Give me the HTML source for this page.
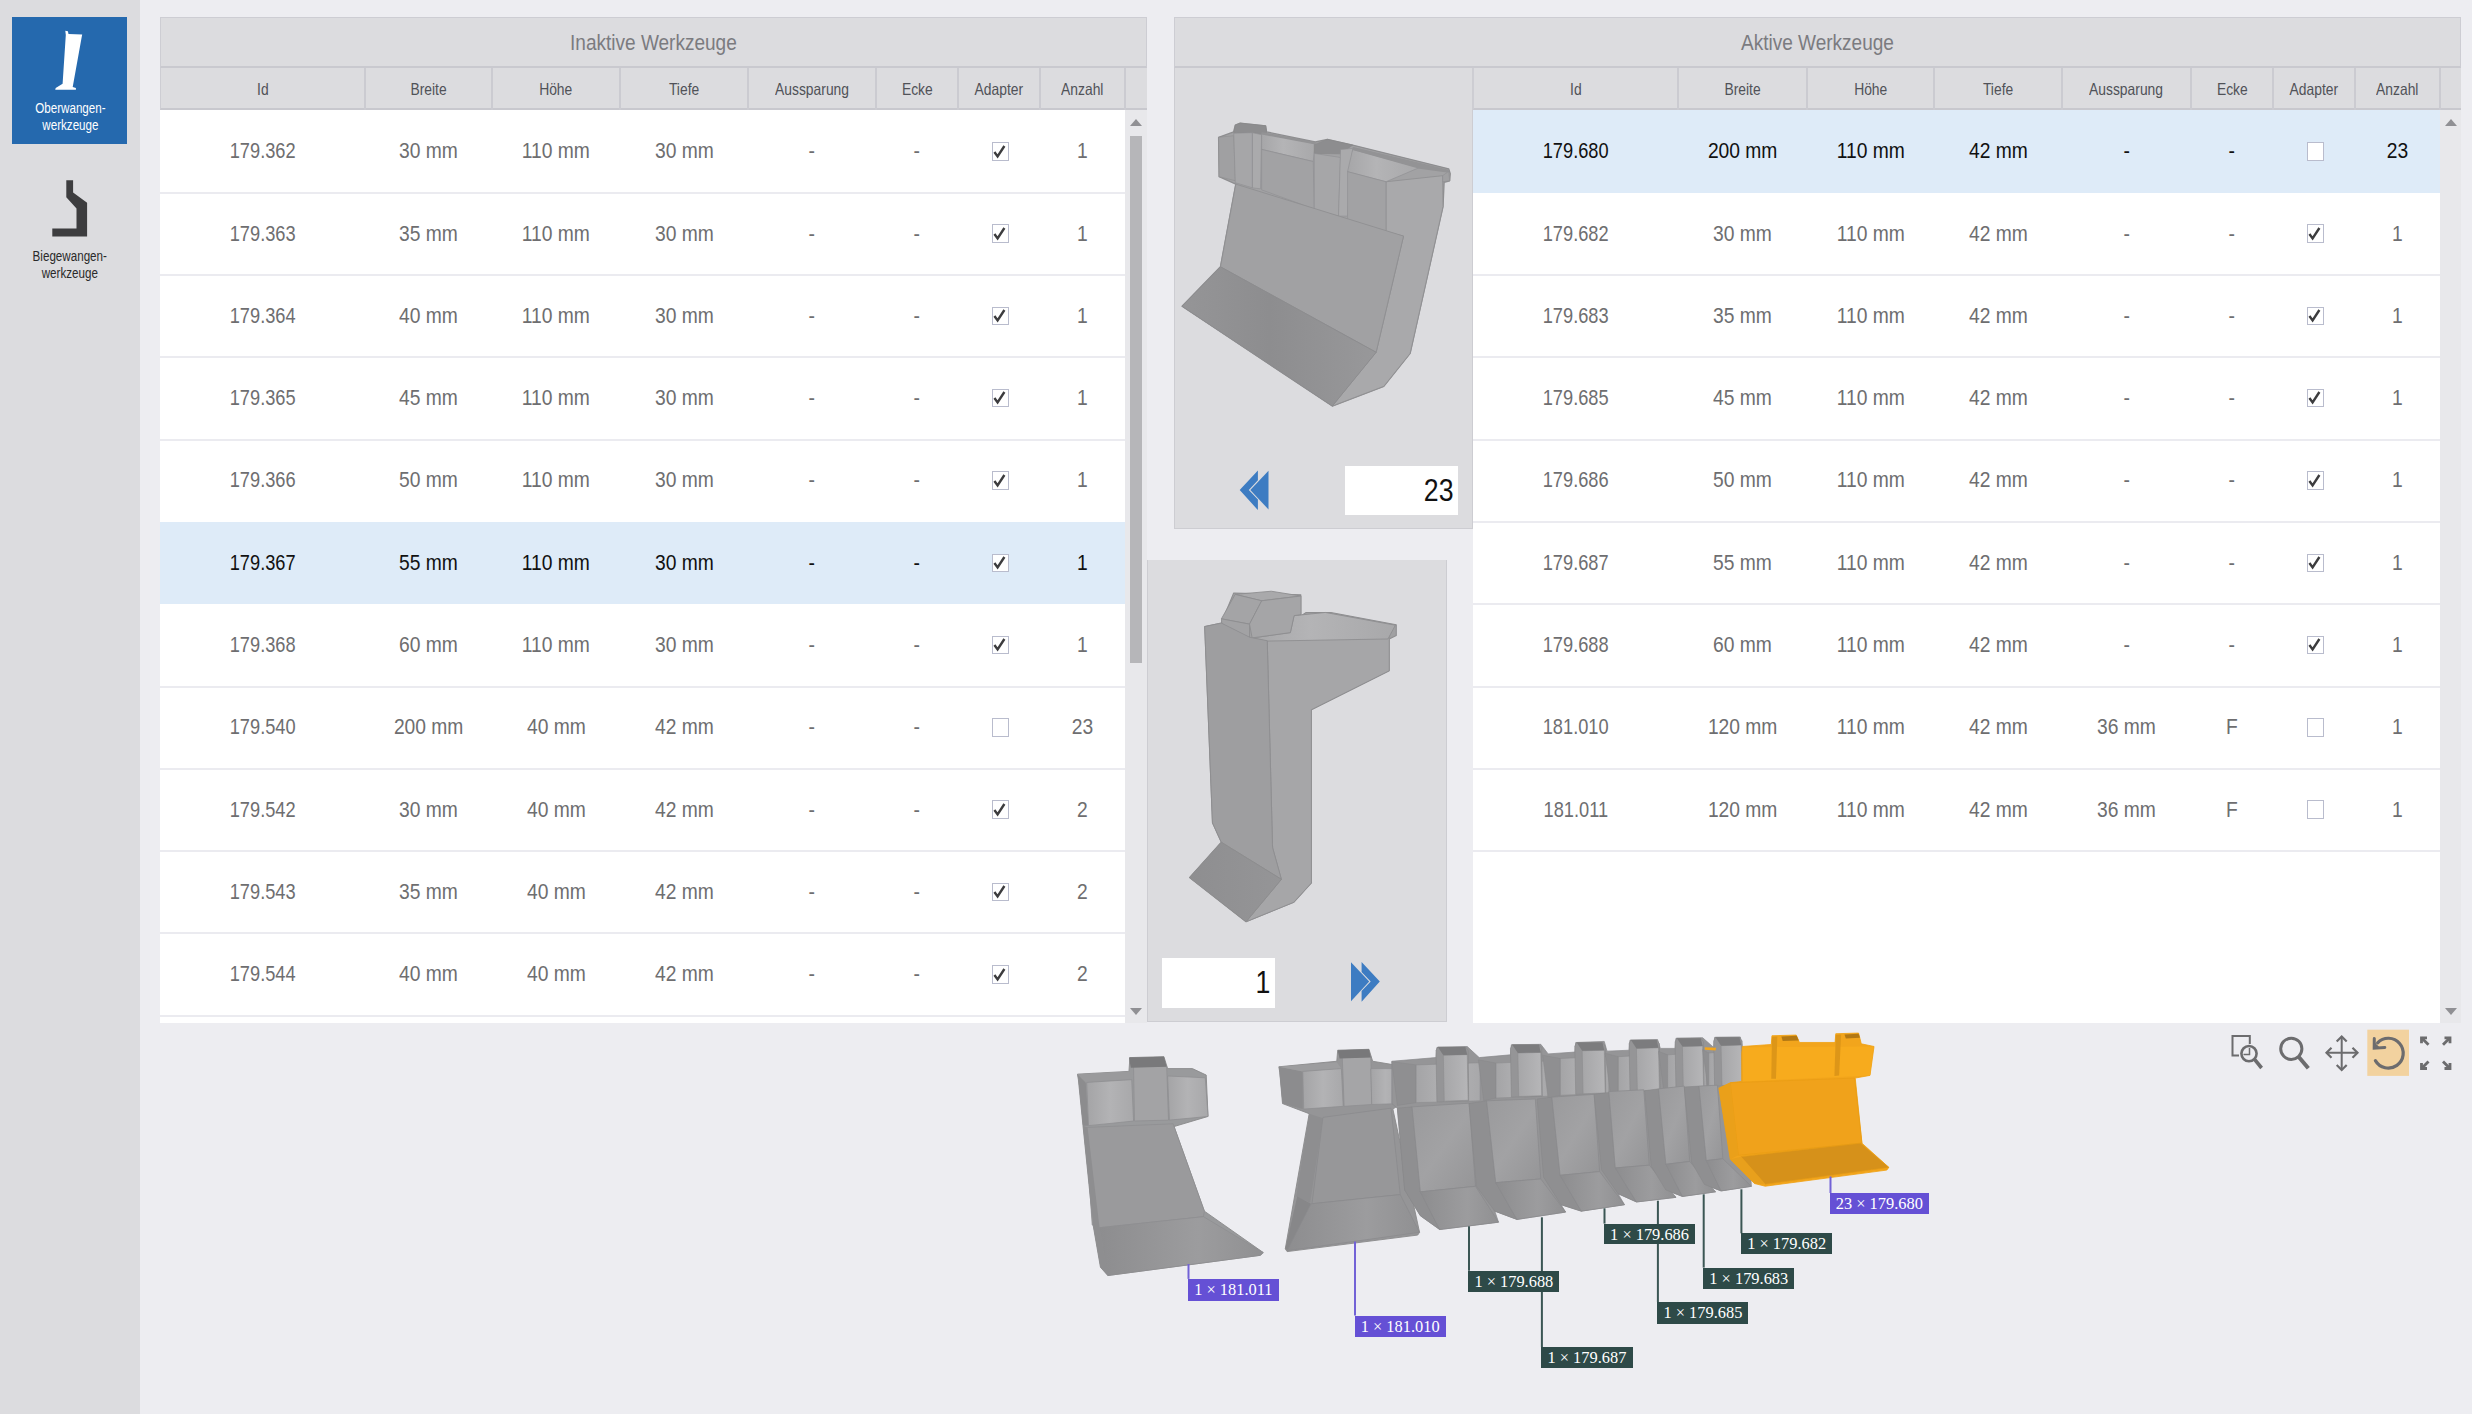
<!DOCTYPE html><html><head><meta charset="utf-8"><style>
*{margin:0;padding:0;box-sizing:border-box}
html,body{width:2472px;height:1414px;overflow:hidden;background:#ededf1;font-family:"Liberation Sans",sans-serif;position:relative}
div{position:absolute}
#side{left:0;top:0;width:140px;height:1414px;background:#dcdcdf}
.navb{left:12px;top:17px;width:115px;height:127px;background:#2569ae}
.navt{left:0;width:140px;text-align:center;font-size:14px;line-height:17px}
.navt span{display:inline-block;transform:scaleX(.83);transform-origin:center}
.tbar{top:17px;height:51px;background:#dcdcdf;border:1px solid #cdcdd3;border-bottom:2px solid #c9c9cf}
.title{top:17px;height:51px;text-align:center;line-height:51px;font-size:22px;color:#7b7b7f}
.title span{display:inline-block;transform:scaleX(.865)}
.hrow{top:68px;height:42px;background:#dcdcdf;border-bottom:2px solid #c8c8ce;border-left:1px solid #cdcdd3}
.hcell{top:68px;height:42px;text-align:center;line-height:43px;font-size:16.5px;color:#505258}
.hcell span{display:inline-block;transform:scaleX(.84)}
.hdiv{top:68px;height:42px;width:2px;background:#cbcbd1}
.body{top:110px;height:913px;background:#fff}
.row{background:#fff}
.sep{height:2px;background:#ebebf0}
.row.sel{background:#deebf8;border-bottom:none}
.cell{height:82px;text-align:center;line-height:82px;font-size:22.5px;color:#6e6e70}
.cell.s{color:#111}
.cell span{display:inline-block;transform:scaleX(.855)}
.cell.i span{transform:scaleX(.81)}
.cb{display:inline-block;vertical-align:middle;width:17px;height:18.5px;border:1.5px solid #b9bccd;background:#fff;position:relative;margin-top:-2px;margin-left:2px}
.cb svg{position:absolute;left:-1.5px;top:-1.5px}
.sb{top:110px;height:913px;background:#e8e8eb}
.arr{width:0;height:0;border-left:6px solid transparent;border-right:6px solid transparent}
.arr.up{top:118.5px;border-bottom:7px solid #909094}
.arr.dn{top:1008px;border-top:7px solid #909094}

.p3d{background:#dcdcdf;border:1px solid #cdcdd2;border-top:none}
.inp{background:#fff;text-align:right;font-size:31px;line-height:49px;color:#111;padding-right:4.5px}
.inp span{display:inline-block;transform:scaleX(.86);transform-origin:right center}
.thumb{left:1130px;top:136px;width:12px;height:527px;background:#b6b6b9}
.lab{color:#fff;font-family:"Liberation Serif",serif;font-size:16.4px;line-height:21px;text-align:center;white-space:nowrap}
.lab.p{background:#6550d5}
.lab.t{background:#2e4a48}
</style></head><body>
<div id="side"></div>
<div class="navb"></div>
<svg style="position:absolute;left:0;top:0" width="140" height="300"><path d="M65.3 30.8 L67.9 31.3 L68.5 34 L82.2 34.5 L81.7 37.1 L72.7 87 L75.9 88.1 L75.9 89.7 L55.2 89.7 L55.7 88.1 L62.6 83.8 L65.8 35 Z" fill="#fff"/><path d="M66.3 180.2 L73.1 180.2 L73.1 192.5 L87.1 202.7 L87.1 236.6 L52.3 236.6 L52.3 228.6 L76.5 228.6 L76.5 208.6 L66.3 197.2 Z" fill="#3d3d3f"/></svg>
<div class="navt" style="top:99.5px;color:#fff"><span>Oberwangen-<br>werkzeuge</span></div>
<div class="navt" style="top:247.5px;color:#2a2a2a"><span>Biegewangen-<br>werkzeuge</span></div>
<div class="tbar" style="left:160px;width:987px"></div>
<div class="title" style="left:160px;width:987px"><span>Inaktive Werkzeuge</span></div>
<div class="hrow" style="left:160px;width:987px"></div>
<div class="hcell" style="left:160px;width:205px"><span>Id</span></div>
<div class="hdiv" style="left:364px"></div>
<div class="hcell" style="left:365px;width:127px"><span>Breite</span></div>
<div class="hdiv" style="left:491px"></div>
<div class="hcell" style="left:492px;width:128px"><span>Höhe</span></div>
<div class="hdiv" style="left:619px"></div>
<div class="hcell" style="left:620px;width:128px"><span>Tiefe</span></div>
<div class="hdiv" style="left:747px"></div>
<div class="hcell" style="left:748px;width:128px"><span>Aussparung</span></div>
<div class="hdiv" style="left:875px"></div>
<div class="hcell" style="left:876px;width:82px"><span>Ecke</span></div>
<div class="hdiv" style="left:957px"></div>
<div class="hcell" style="left:958px;width:82px"><span>Adapter</span></div>
<div class="hdiv" style="left:1039px"></div>
<div class="hcell" style="left:1040px;width:85px"><span>Anzahl</span></div>
<div class="hdiv" style="left:1124px"></div>
<div class="body" style="left:160px;width:965px"></div>
<div class="row" style="left:160px;width:965px;top:110.30px;height:82.29px"></div>
<div class="cell i" style="left:160px;width:205px;top:110.30px"><span>179.362</span></div>
<div class="cell " style="left:365px;width:127px;top:110.30px"><span>30 mm</span></div>
<div class="cell " style="left:492px;width:128px;top:110.30px"><span>110 mm</span></div>
<div class="cell " style="left:620px;width:128px;top:110.30px"><span>30 mm</span></div>
<div class="cell " style="left:748px;width:128px;top:110.30px"><span>-</span></div>
<div class="cell " style="left:876px;width:82px;top:110.30px"><span>-</span></div>
<div class="cell" style="left:958px;width:82px;top:110.30px"><i class="cb"><svg width="16" height="18" viewBox="0 0 16 18"><path d="M3.4 10 L6.6 14.4 L13.4 4" fill="none" stroke="#3c3c3e" stroke-width="2.4" stroke-linejoin="miter"/></svg></i></div>
<div class="cell " style="left:1040px;width:85px;top:110.30px"><span>1</span></div>
<div class="row" style="left:160px;width:965px;top:192.59px;height:82.29px"></div>
<div class="cell i" style="left:160px;width:205px;top:192.59px"><span>179.363</span></div>
<div class="cell " style="left:365px;width:127px;top:192.59px"><span>35 mm</span></div>
<div class="cell " style="left:492px;width:128px;top:192.59px"><span>110 mm</span></div>
<div class="cell " style="left:620px;width:128px;top:192.59px"><span>30 mm</span></div>
<div class="cell " style="left:748px;width:128px;top:192.59px"><span>-</span></div>
<div class="cell " style="left:876px;width:82px;top:192.59px"><span>-</span></div>
<div class="cell" style="left:958px;width:82px;top:192.59px"><i class="cb"><svg width="16" height="18" viewBox="0 0 16 18"><path d="M3.4 10 L6.6 14.4 L13.4 4" fill="none" stroke="#3c3c3e" stroke-width="2.4" stroke-linejoin="miter"/></svg></i></div>
<div class="cell " style="left:1040px;width:85px;top:192.59px"><span>1</span></div>
<div class="row" style="left:160px;width:965px;top:274.88px;height:82.29px"></div>
<div class="cell i" style="left:160px;width:205px;top:274.88px"><span>179.364</span></div>
<div class="cell " style="left:365px;width:127px;top:274.88px"><span>40 mm</span></div>
<div class="cell " style="left:492px;width:128px;top:274.88px"><span>110 mm</span></div>
<div class="cell " style="left:620px;width:128px;top:274.88px"><span>30 mm</span></div>
<div class="cell " style="left:748px;width:128px;top:274.88px"><span>-</span></div>
<div class="cell " style="left:876px;width:82px;top:274.88px"><span>-</span></div>
<div class="cell" style="left:958px;width:82px;top:274.88px"><i class="cb"><svg width="16" height="18" viewBox="0 0 16 18"><path d="M3.4 10 L6.6 14.4 L13.4 4" fill="none" stroke="#3c3c3e" stroke-width="2.4" stroke-linejoin="miter"/></svg></i></div>
<div class="cell " style="left:1040px;width:85px;top:274.88px"><span>1</span></div>
<div class="row" style="left:160px;width:965px;top:357.17px;height:82.29px"></div>
<div class="cell i" style="left:160px;width:205px;top:357.17px"><span>179.365</span></div>
<div class="cell " style="left:365px;width:127px;top:357.17px"><span>45 mm</span></div>
<div class="cell " style="left:492px;width:128px;top:357.17px"><span>110 mm</span></div>
<div class="cell " style="left:620px;width:128px;top:357.17px"><span>30 mm</span></div>
<div class="cell " style="left:748px;width:128px;top:357.17px"><span>-</span></div>
<div class="cell " style="left:876px;width:82px;top:357.17px"><span>-</span></div>
<div class="cell" style="left:958px;width:82px;top:357.17px"><i class="cb"><svg width="16" height="18" viewBox="0 0 16 18"><path d="M3.4 10 L6.6 14.4 L13.4 4" fill="none" stroke="#3c3c3e" stroke-width="2.4" stroke-linejoin="miter"/></svg></i></div>
<div class="cell " style="left:1040px;width:85px;top:357.17px"><span>1</span></div>
<div class="row" style="left:160px;width:965px;top:439.46px;height:82.29px"></div>
<div class="cell i" style="left:160px;width:205px;top:439.46px"><span>179.366</span></div>
<div class="cell " style="left:365px;width:127px;top:439.46px"><span>50 mm</span></div>
<div class="cell " style="left:492px;width:128px;top:439.46px"><span>110 mm</span></div>
<div class="cell " style="left:620px;width:128px;top:439.46px"><span>30 mm</span></div>
<div class="cell " style="left:748px;width:128px;top:439.46px"><span>-</span></div>
<div class="cell " style="left:876px;width:82px;top:439.46px"><span>-</span></div>
<div class="cell" style="left:958px;width:82px;top:439.46px"><i class="cb"><svg width="16" height="18" viewBox="0 0 16 18"><path d="M3.4 10 L6.6 14.4 L13.4 4" fill="none" stroke="#3c3c3e" stroke-width="2.4" stroke-linejoin="miter"/></svg></i></div>
<div class="cell " style="left:1040px;width:85px;top:439.46px"><span>1</span></div>
<div class="row sel" style="left:160px;width:965px;top:521.75px;height:82.29px"></div>
<div class="cell s i" style="left:160px;width:205px;top:521.75px"><span>179.367</span></div>
<div class="cell s " style="left:365px;width:127px;top:521.75px"><span>55 mm</span></div>
<div class="cell s " style="left:492px;width:128px;top:521.75px"><span>110 mm</span></div>
<div class="cell s " style="left:620px;width:128px;top:521.75px"><span>30 mm</span></div>
<div class="cell s " style="left:748px;width:128px;top:521.75px"><span>-</span></div>
<div class="cell s " style="left:876px;width:82px;top:521.75px"><span>-</span></div>
<div class="cell s" style="left:958px;width:82px;top:521.75px"><i class="cb"><svg width="16" height="18" viewBox="0 0 16 18"><path d="M3.4 10 L6.6 14.4 L13.4 4" fill="none" stroke="#3c3c3e" stroke-width="2.4" stroke-linejoin="miter"/></svg></i></div>
<div class="cell s " style="left:1040px;width:85px;top:521.75px"><span>1</span></div>
<div class="row" style="left:160px;width:965px;top:604.04px;height:82.29px"></div>
<div class="cell i" style="left:160px;width:205px;top:604.04px"><span>179.368</span></div>
<div class="cell " style="left:365px;width:127px;top:604.04px"><span>60 mm</span></div>
<div class="cell " style="left:492px;width:128px;top:604.04px"><span>110 mm</span></div>
<div class="cell " style="left:620px;width:128px;top:604.04px"><span>30 mm</span></div>
<div class="cell " style="left:748px;width:128px;top:604.04px"><span>-</span></div>
<div class="cell " style="left:876px;width:82px;top:604.04px"><span>-</span></div>
<div class="cell" style="left:958px;width:82px;top:604.04px"><i class="cb"><svg width="16" height="18" viewBox="0 0 16 18"><path d="M3.4 10 L6.6 14.4 L13.4 4" fill="none" stroke="#3c3c3e" stroke-width="2.4" stroke-linejoin="miter"/></svg></i></div>
<div class="cell " style="left:1040px;width:85px;top:604.04px"><span>1</span></div>
<div class="row" style="left:160px;width:965px;top:686.33px;height:82.29px"></div>
<div class="cell i" style="left:160px;width:205px;top:686.33px"><span>179.540</span></div>
<div class="cell " style="left:365px;width:127px;top:686.33px"><span>200 mm</span></div>
<div class="cell " style="left:492px;width:128px;top:686.33px"><span>40 mm</span></div>
<div class="cell " style="left:620px;width:128px;top:686.33px"><span>42 mm</span></div>
<div class="cell " style="left:748px;width:128px;top:686.33px"><span>-</span></div>
<div class="cell " style="left:876px;width:82px;top:686.33px"><span>-</span></div>
<div class="cell" style="left:958px;width:82px;top:686.33px"><i class="cb"></i></div>
<div class="cell " style="left:1040px;width:85px;top:686.33px"><span>23</span></div>
<div class="row" style="left:160px;width:965px;top:768.62px;height:82.29px"></div>
<div class="cell i" style="left:160px;width:205px;top:768.62px"><span>179.542</span></div>
<div class="cell " style="left:365px;width:127px;top:768.62px"><span>30 mm</span></div>
<div class="cell " style="left:492px;width:128px;top:768.62px"><span>40 mm</span></div>
<div class="cell " style="left:620px;width:128px;top:768.62px"><span>42 mm</span></div>
<div class="cell " style="left:748px;width:128px;top:768.62px"><span>-</span></div>
<div class="cell " style="left:876px;width:82px;top:768.62px"><span>-</span></div>
<div class="cell" style="left:958px;width:82px;top:768.62px"><i class="cb"><svg width="16" height="18" viewBox="0 0 16 18"><path d="M3.4 10 L6.6 14.4 L13.4 4" fill="none" stroke="#3c3c3e" stroke-width="2.4" stroke-linejoin="miter"/></svg></i></div>
<div class="cell " style="left:1040px;width:85px;top:768.62px"><span>2</span></div>
<div class="row" style="left:160px;width:965px;top:850.91px;height:82.29px"></div>
<div class="cell i" style="left:160px;width:205px;top:850.91px"><span>179.543</span></div>
<div class="cell " style="left:365px;width:127px;top:850.91px"><span>35 mm</span></div>
<div class="cell " style="left:492px;width:128px;top:850.91px"><span>40 mm</span></div>
<div class="cell " style="left:620px;width:128px;top:850.91px"><span>42 mm</span></div>
<div class="cell " style="left:748px;width:128px;top:850.91px"><span>-</span></div>
<div class="cell " style="left:876px;width:82px;top:850.91px"><span>-</span></div>
<div class="cell" style="left:958px;width:82px;top:850.91px"><i class="cb"><svg width="16" height="18" viewBox="0 0 16 18"><path d="M3.4 10 L6.6 14.4 L13.4 4" fill="none" stroke="#3c3c3e" stroke-width="2.4" stroke-linejoin="miter"/></svg></i></div>
<div class="cell " style="left:1040px;width:85px;top:850.91px"><span>2</span></div>
<div class="row" style="left:160px;width:965px;top:933.20px;height:82.29px"></div>
<div class="cell i" style="left:160px;width:205px;top:933.20px"><span>179.544</span></div>
<div class="cell " style="left:365px;width:127px;top:933.20px"><span>40 mm</span></div>
<div class="cell " style="left:492px;width:128px;top:933.20px"><span>40 mm</span></div>
<div class="cell " style="left:620px;width:128px;top:933.20px"><span>42 mm</span></div>
<div class="cell " style="left:748px;width:128px;top:933.20px"><span>-</span></div>
<div class="cell " style="left:876px;width:82px;top:933.20px"><span>-</span></div>
<div class="cell" style="left:958px;width:82px;top:933.20px"><i class="cb"><svg width="16" height="18" viewBox="0 0 16 18"><path d="M3.4 10 L6.6 14.4 L13.4 4" fill="none" stroke="#3c3c3e" stroke-width="2.4" stroke-linejoin="miter"/></svg></i></div>
<div class="cell " style="left:1040px;width:85px;top:933.20px"><span>2</span></div>
<div class="sep" style="left:160px;width:965px;top:191.79px"></div>
<div class="sep" style="left:160px;width:965px;top:274.08px"></div>
<div class="sep" style="left:160px;width:965px;top:356.37px"></div>
<div class="sep" style="left:160px;width:965px;top:438.66px"></div>
<div class="sep" style="left:160px;width:965px;top:685.53px"></div>
<div class="sep" style="left:160px;width:965px;top:767.82px"></div>
<div class="sep" style="left:160px;width:965px;top:850.11px"></div>
<div class="sep" style="left:160px;width:965px;top:932.40px"></div>
<div class="sep" style="left:160px;width:965px;top:1014.69px"></div>
<div class="sb" style="left:1125px;width:22px"></div>
<div class="arr up" style="left:1130px"></div>
<div class="arr dn" style="left:1130px"></div>
<div class="tbar" style="left:1174px;width:1287px"></div>
<div class="title" style="left:1174px;width:1287px"><span>Aktive Werkzeuge</span></div>
<div class="hrow" style="left:1473px;width:988px"></div>
<div class="hcell" style="left:1473px;width:205px"><span>Id</span></div>
<div class="hdiv" style="left:1677px"></div>
<div class="hcell" style="left:1678px;width:129px"><span>Breite</span></div>
<div class="hdiv" style="left:1806px"></div>
<div class="hcell" style="left:1807px;width:127px"><span>Höhe</span></div>
<div class="hdiv" style="left:1933px"></div>
<div class="hcell" style="left:1934px;width:128px"><span>Tiefe</span></div>
<div class="hdiv" style="left:2061px"></div>
<div class="hcell" style="left:2062px;width:129px"><span>Aussparung</span></div>
<div class="hdiv" style="left:2190px"></div>
<div class="hcell" style="left:2191px;width:82px"><span>Ecke</span></div>
<div class="hdiv" style="left:2272px"></div>
<div class="hcell" style="left:2273px;width:82px"><span>Adapter</span></div>
<div class="hdiv" style="left:2354px"></div>
<div class="hcell" style="left:2355px;width:85px"><span>Anzahl</span></div>
<div class="hdiv" style="left:2439px"></div>
<div class="body" style="left:1473px;width:967px"></div>
<div class="row sel" style="left:1473px;width:967px;top:110.30px;height:82.29px"></div>
<div class="cell s i" style="left:1473px;width:205px;top:110.30px"><span>179.680</span></div>
<div class="cell s " style="left:1678px;width:129px;top:110.30px"><span>200 mm</span></div>
<div class="cell s " style="left:1807px;width:127px;top:110.30px"><span>110 mm</span></div>
<div class="cell s " style="left:1934px;width:128px;top:110.30px"><span>42 mm</span></div>
<div class="cell s " style="left:2062px;width:129px;top:110.30px"><span>-</span></div>
<div class="cell s " style="left:2191px;width:82px;top:110.30px"><span>-</span></div>
<div class="cell s" style="left:2273px;width:82px;top:110.30px"><i class="cb"></i></div>
<div class="cell s " style="left:2355px;width:85px;top:110.30px"><span>23</span></div>
<div class="row" style="left:1473px;width:967px;top:192.59px;height:82.29px"></div>
<div class="cell i" style="left:1473px;width:205px;top:192.59px"><span>179.682</span></div>
<div class="cell " style="left:1678px;width:129px;top:192.59px"><span>30 mm</span></div>
<div class="cell " style="left:1807px;width:127px;top:192.59px"><span>110 mm</span></div>
<div class="cell " style="left:1934px;width:128px;top:192.59px"><span>42 mm</span></div>
<div class="cell " style="left:2062px;width:129px;top:192.59px"><span>-</span></div>
<div class="cell " style="left:2191px;width:82px;top:192.59px"><span>-</span></div>
<div class="cell" style="left:2273px;width:82px;top:192.59px"><i class="cb"><svg width="16" height="18" viewBox="0 0 16 18"><path d="M3.4 10 L6.6 14.4 L13.4 4" fill="none" stroke="#3c3c3e" stroke-width="2.4" stroke-linejoin="miter"/></svg></i></div>
<div class="cell " style="left:2355px;width:85px;top:192.59px"><span>1</span></div>
<div class="row" style="left:1473px;width:967px;top:274.88px;height:82.29px"></div>
<div class="cell i" style="left:1473px;width:205px;top:274.88px"><span>179.683</span></div>
<div class="cell " style="left:1678px;width:129px;top:274.88px"><span>35 mm</span></div>
<div class="cell " style="left:1807px;width:127px;top:274.88px"><span>110 mm</span></div>
<div class="cell " style="left:1934px;width:128px;top:274.88px"><span>42 mm</span></div>
<div class="cell " style="left:2062px;width:129px;top:274.88px"><span>-</span></div>
<div class="cell " style="left:2191px;width:82px;top:274.88px"><span>-</span></div>
<div class="cell" style="left:2273px;width:82px;top:274.88px"><i class="cb"><svg width="16" height="18" viewBox="0 0 16 18"><path d="M3.4 10 L6.6 14.4 L13.4 4" fill="none" stroke="#3c3c3e" stroke-width="2.4" stroke-linejoin="miter"/></svg></i></div>
<div class="cell " style="left:2355px;width:85px;top:274.88px"><span>1</span></div>
<div class="row" style="left:1473px;width:967px;top:357.17px;height:82.29px"></div>
<div class="cell i" style="left:1473px;width:205px;top:357.17px"><span>179.685</span></div>
<div class="cell " style="left:1678px;width:129px;top:357.17px"><span>45 mm</span></div>
<div class="cell " style="left:1807px;width:127px;top:357.17px"><span>110 mm</span></div>
<div class="cell " style="left:1934px;width:128px;top:357.17px"><span>42 mm</span></div>
<div class="cell " style="left:2062px;width:129px;top:357.17px"><span>-</span></div>
<div class="cell " style="left:2191px;width:82px;top:357.17px"><span>-</span></div>
<div class="cell" style="left:2273px;width:82px;top:357.17px"><i class="cb"><svg width="16" height="18" viewBox="0 0 16 18"><path d="M3.4 10 L6.6 14.4 L13.4 4" fill="none" stroke="#3c3c3e" stroke-width="2.4" stroke-linejoin="miter"/></svg></i></div>
<div class="cell " style="left:2355px;width:85px;top:357.17px"><span>1</span></div>
<div class="row" style="left:1473px;width:967px;top:439.46px;height:82.29px"></div>
<div class="cell i" style="left:1473px;width:205px;top:439.46px"><span>179.686</span></div>
<div class="cell " style="left:1678px;width:129px;top:439.46px"><span>50 mm</span></div>
<div class="cell " style="left:1807px;width:127px;top:439.46px"><span>110 mm</span></div>
<div class="cell " style="left:1934px;width:128px;top:439.46px"><span>42 mm</span></div>
<div class="cell " style="left:2062px;width:129px;top:439.46px"><span>-</span></div>
<div class="cell " style="left:2191px;width:82px;top:439.46px"><span>-</span></div>
<div class="cell" style="left:2273px;width:82px;top:439.46px"><i class="cb"><svg width="16" height="18" viewBox="0 0 16 18"><path d="M3.4 10 L6.6 14.4 L13.4 4" fill="none" stroke="#3c3c3e" stroke-width="2.4" stroke-linejoin="miter"/></svg></i></div>
<div class="cell " style="left:2355px;width:85px;top:439.46px"><span>1</span></div>
<div class="row" style="left:1473px;width:967px;top:521.75px;height:82.29px"></div>
<div class="cell i" style="left:1473px;width:205px;top:521.75px"><span>179.687</span></div>
<div class="cell " style="left:1678px;width:129px;top:521.75px"><span>55 mm</span></div>
<div class="cell " style="left:1807px;width:127px;top:521.75px"><span>110 mm</span></div>
<div class="cell " style="left:1934px;width:128px;top:521.75px"><span>42 mm</span></div>
<div class="cell " style="left:2062px;width:129px;top:521.75px"><span>-</span></div>
<div class="cell " style="left:2191px;width:82px;top:521.75px"><span>-</span></div>
<div class="cell" style="left:2273px;width:82px;top:521.75px"><i class="cb"><svg width="16" height="18" viewBox="0 0 16 18"><path d="M3.4 10 L6.6 14.4 L13.4 4" fill="none" stroke="#3c3c3e" stroke-width="2.4" stroke-linejoin="miter"/></svg></i></div>
<div class="cell " style="left:2355px;width:85px;top:521.75px"><span>1</span></div>
<div class="row" style="left:1473px;width:967px;top:604.04px;height:82.29px"></div>
<div class="cell i" style="left:1473px;width:205px;top:604.04px"><span>179.688</span></div>
<div class="cell " style="left:1678px;width:129px;top:604.04px"><span>60 mm</span></div>
<div class="cell " style="left:1807px;width:127px;top:604.04px"><span>110 mm</span></div>
<div class="cell " style="left:1934px;width:128px;top:604.04px"><span>42 mm</span></div>
<div class="cell " style="left:2062px;width:129px;top:604.04px"><span>-</span></div>
<div class="cell " style="left:2191px;width:82px;top:604.04px"><span>-</span></div>
<div class="cell" style="left:2273px;width:82px;top:604.04px"><i class="cb"><svg width="16" height="18" viewBox="0 0 16 18"><path d="M3.4 10 L6.6 14.4 L13.4 4" fill="none" stroke="#3c3c3e" stroke-width="2.4" stroke-linejoin="miter"/></svg></i></div>
<div class="cell " style="left:2355px;width:85px;top:604.04px"><span>1</span></div>
<div class="row" style="left:1473px;width:967px;top:686.33px;height:82.29px"></div>
<div class="cell i" style="left:1473px;width:205px;top:686.33px"><span>181.010</span></div>
<div class="cell " style="left:1678px;width:129px;top:686.33px"><span>120 mm</span></div>
<div class="cell " style="left:1807px;width:127px;top:686.33px"><span>110 mm</span></div>
<div class="cell " style="left:1934px;width:128px;top:686.33px"><span>42 mm</span></div>
<div class="cell " style="left:2062px;width:129px;top:686.33px"><span>36 mm</span></div>
<div class="cell " style="left:2191px;width:82px;top:686.33px"><span>F</span></div>
<div class="cell" style="left:2273px;width:82px;top:686.33px"><i class="cb"></i></div>
<div class="cell " style="left:2355px;width:85px;top:686.33px"><span>1</span></div>
<div class="row" style="left:1473px;width:967px;top:768.62px;height:82.29px"></div>
<div class="cell i" style="left:1473px;width:205px;top:768.62px"><span>181.011</span></div>
<div class="cell " style="left:1678px;width:129px;top:768.62px"><span>120 mm</span></div>
<div class="cell " style="left:1807px;width:127px;top:768.62px"><span>110 mm</span></div>
<div class="cell " style="left:1934px;width:128px;top:768.62px"><span>42 mm</span></div>
<div class="cell " style="left:2062px;width:129px;top:768.62px"><span>36 mm</span></div>
<div class="cell " style="left:2191px;width:82px;top:768.62px"><span>F</span></div>
<div class="cell" style="left:2273px;width:82px;top:768.62px"><i class="cb"></i></div>
<div class="cell " style="left:2355px;width:85px;top:768.62px"><span>1</span></div>
<div class="sep" style="left:1473px;width:967px;top:274.08px"></div>
<div class="sep" style="left:1473px;width:967px;top:356.37px"></div>
<div class="sep" style="left:1473px;width:967px;top:438.66px"></div>
<div class="sep" style="left:1473px;width:967px;top:520.95px"></div>
<div class="sep" style="left:1473px;width:967px;top:603.24px"></div>
<div class="sep" style="left:1473px;width:967px;top:685.53px"></div>
<div class="sep" style="left:1473px;width:967px;top:767.82px"></div>
<div class="sep" style="left:1473px;width:967px;top:850.11px"></div>
<div class="sb" style="left:2440px;width:21px"></div>
<div class="arr up" style="left:2445px"></div>
<div class="arr dn" style="left:2445px"></div>
<div class="thumb"></div>
<div class="p3d" style="left:1174px;top:68px;width:299px;height:461px"></div>
<div class="p3d" style="left:1147px;top:560px;width:300px;height:462px"></div>
<div class="inp" style="left:1345.4px;top:466.1px;width:112.3px;height:48.6px"><span>23</span></div>
<div class="inp" style="left:1162.3px;top:958px;width:112.7px;height:49.6px"><span>1</span></div>
<svg style="position:absolute;left:0;top:0" width="2472" height="1414"><defs>
<linearGradient id="gflange" x1="0" x2="1" y1="0" y2="0"><stop offset="0" stop-color="#959597"/><stop offset=".45" stop-color="#8d8d8f"/><stop offset="1" stop-color="#98989a"/></linearGradient>
<linearGradient id="gchan" x1="0" x2="1" y1="0" y2="0"><stop offset="0" stop-color="#a6a6a8"/><stop offset=".4" stop-color="#b4b4b6"/><stop offset="1" stop-color="#a8a8aa"/></linearGradient>
<linearGradient id="gflange2" x1="0" x2="1" y1="0" y2="0"><stop offset="0" stop-color="#8e8e90"/><stop offset="1" stop-color="#959597"/></linearGradient>
<linearGradient id="gflange3" x1="0" x2="1" y1="0" y2="0"><stop offset="0" stop-color="#8d8d8f"/><stop offset=".6" stop-color="#9c9c9e"/><stop offset="1" stop-color="#909092"/></linearGradient>
<linearGradient id="gadapt" x1="0" x2="1" y1="0" y2="0"><stop offset="0" stop-color="#a4a4a6"/><stop offset=".5" stop-color="#b3b3b5"/><stop offset="1" stop-color="#a8a8aa"/></linearGradient>
<linearGradient id="gtab" x1="0" x2="1" y1="0" y2="0"><stop offset="0" stop-color="#a6a6a8"/><stop offset="1" stop-color="#b6b6b8"/></linearGradient>
<linearGradient id="gblade" x1="0" x2="1" y1="0" y2="1"><stop offset="0" stop-color="#9a9a9c"/><stop offset=".5" stop-color="#a2a2a4"/><stop offset="1" stop-color="#959597"/></linearGradient>
</defs><g transform="translate(1170,110) scale(0.219298)"><polygon points="221.6,124.3 290,100 297.7,68.9 320,60 436.1,72 440.7,100 662.4,146 717.8,134 833.1,160 1270.8,268 1278,290 1275.4,322.6 1250,330 1245,440 1095,1110 975,1260 740,1350 55,895 230,715 300,338 223.9,304.1" fill="#a2a2a4" stroke="#8e8e90" stroke-width="6" stroke-linejoin="round"/><polygon points="984.9,327.2 1243.2,299.5 1245,440 1095,1110 975,1260 740,1350 940,1105 1065,575 984.9,555" fill="#a9a9ab" stroke="#909092" stroke-width="4" stroke-linejoin="round"/><polygon points="221.6,124.3 290.8,117.3 297.7,322.6 223.9,304.1" fill="#a0a0a2" stroke="#8f8f91" stroke-width="3" stroke-linejoin="round"/><polygon points="290.8,105.8 297.7,68.9 320,60 436.1,72 440.7,112 376.1,103.5" fill="#8d8d8f" stroke="#88888a" stroke-width="3" stroke-linejoin="round"/><polygon points="290.8,105.8 376.1,103.5 376.1,354.9 297.7,331.8" fill="#a6a6a8" stroke="#909092" stroke-width="3" stroke-linejoin="round"/><polygon points="376.1,103.5 417.6,112.7 413,359.5 376.1,354.9" fill="#aaaaac" stroke="#909092" stroke-width="3" stroke-linejoin="round"/><polygon points="417.6,105.8 662.4,151.9 653.2,235 417.6,179.6" fill="url(#gchan)" stroke="#909092" stroke-width="3" stroke-linejoin="round"/><polygon points="417.6,100 662.4,146 662.4,157 417.6,112" fill="#939395"/><polygon points="417.6,179.6 653.2,235 657.8,451.7 417.6,364.1" fill="#a2a2a4" stroke="#909092" stroke-width="3" stroke-linejoin="round"/><polygon points="657.8,158 717.8,134 833.1,160 777.7,200 657.8,198" fill="#8d8d8f" stroke="#88888a" stroke-width="3" stroke-linejoin="round"/><polygon points="657.8,198 777.7,216.5 768.5,484 657.8,456.3" fill="#a6a6a8" stroke="#909092" stroke-width="3" stroke-linejoin="round"/><polygon points="777.7,179.6 833.1,175 810,484 768.5,484" fill="#aaaaac" stroke="#909092" stroke-width="3" stroke-linejoin="round"/><polygon points="833.1,179.6 1137.1,262.6 984.9,327.2 809.6,281.1" fill="url(#gchan)" stroke="#909092" stroke-width="3" stroke-linejoin="round"/><polygon points="833.1,168 1270.8,272 1270.8,286 1137,268 833.1,182" fill="#939395"/><polygon points="809.6,281.1 984.9,327.2 984.9,555 809.6,500" fill="#a2a2a4" stroke="#909092" stroke-width="3" stroke-linejoin="round"/><polygon points="1243.2,299.5 1270.8,280 1275.4,322.6 1243.2,327.2" fill="#a0a0a2" stroke="#909092" stroke-width="3" stroke-linejoin="round"/><polygon points="300,338 1065,575 940,1105 230,715" fill="#a1a1a3" stroke="#8f8f91" stroke-width="4" stroke-linejoin="round"/><polygon points="55,895 230,715 940,1105 740,1350" fill="url(#gflange)" stroke="#8c8c8e" stroke-width="4" stroke-linejoin="round"/></g><g transform="translate(1140,540) scale(0.353482)"><polygon points="183,245 230,235 265,150 455,155 455,215 470,205 540,205 725,240 725,270 705,280 705,370 485,480 485,970 435,1025 300,1080 140,955 230,855 205,800" fill="#a0a0a2" stroke="#8e8e90" stroke-width="3" stroke-linejoin="round"/><polygon points="360,285 705,245 705,370 485,480 485,970 435,1025 300,1080 400,960 375,870" fill="#a6a6a8" stroke="#8f8f91" stroke-width="2.5" stroke-linejoin="round"/><polygon points="435.9,214 524.4,205 722.5,241 701.5,280 359.3,286 317.3,277 425.4,262" fill="url(#gchan)" stroke="#8e8e90" stroke-width="2.5" stroke-linejoin="round"/><polygon points="269.3,153.9 371.3,144.9 455.4,158.4 344.3,171.9" fill="#a9a9ab" stroke="#8e8e90" stroke-width="2.5" stroke-linejoin="round"/><polygon points="230.3,223 269.3,153.9 344.3,171.9 309.8,238" fill="#a4a4a6" stroke="#8e8e90" stroke-width="2.5" stroke-linejoin="round"/><polygon points="230.3,223 309.8,238 309.8,277 233.3,259" fill="#a2a2a4" stroke="#8e8e90" stroke-width="2.5" stroke-linejoin="round"/><polygon points="309.8,238 344.3,171.9 455.4,158.4 455.4,211 435.9,214 425.4,262 317.3,277" fill="#a5a5a7" stroke="#8e8e90" stroke-width="2.5" stroke-linejoin="round"/><polygon points="183,245 230,235 310,275 360,285 375,870 400,960 230,855 205,800" fill="#9e9ea0" stroke="#8e8e90" stroke-width="2.5" stroke-linejoin="round"/><polygon points="140,955 230,855 400,960 300,1080" fill="url(#gflange2)" stroke="#8c8c8e" stroke-width="2.5" stroke-linejoin="round"/></g><polygon points="1239.7,489.9 1257.9,470.4 1257.9,480.3 1248.8,489.9 1257.9,499.5 1257.9,510.1" fill="#3d7cc2"/><polygon points="1250.3,489.9 1268.5,470.7 1268.5,509.6" fill="#3d7cc2"/><polygon points="1379.8,981.5 1361.6,962.0 1361.6,971.9 1370.7,981.5 1361.6,991.1 1361.6,1001.7" fill="#3d7cc2"/><polygon points="1369.2,981.5 1351.0,962.3 1351.0,1001.2" fill="#3d7cc2"/><g transform="translate(1060,1030) scale(0.183908)"><polygon points="95,240 375,225 380,150 565,145 585,210 720,210 795,245 805,470 620,525 785,985 1105,1210 1090,1225 260,1335 220,1290 180,1060 125,520 100,270" fill="#999a9c" stroke="#8a8a8c" stroke-width="5" stroke-linejoin="round"/><polygon points="95,240 140,285 155,520 125,520 100,270" fill="#8c8c8e"/><polygon points="95,240 375,225 385,265 140,285" fill="#9a9a9c"/><polygon points="145,285 390,270 400,495 155,520" fill="url(#gadapt)" stroke="#8e8e90" stroke-width="4" stroke-linejoin="round"/><polygon points="400,200 580,195 590,490 405,495" fill="#a3a3a5" stroke="#8e8e90" stroke-width="4" stroke-linejoin="round"/><polygon points="375,150 565,145 580,200 385,205" fill="#79797b"/><polygon points="585,250 790,260 805,470 595,490" fill="url(#gadapt)" stroke="#8e8e90" stroke-width="4" stroke-linejoin="round"/><polygon points="140,530 615,510 785,985 780,1015 215,1075 175,1060" fill="#9a9a9c" stroke="#8e8e90" stroke-width="4" stroke-linejoin="round"/><polygon points="215,1075 780,1015 1105,1210 1090,1225 260,1335" fill="url(#gflange3)" stroke="#8e8e90" stroke-width="4" stroke-linejoin="round"/><polygon points="125,520 150,530 215,1075 260,1335 220,1290 180,1060" fill="#8e8e90"/><polygon points="1190,200 1505,170 1510,110 1680,105 1700,170 1850,195 1855,400 1810,430 1955,1100 1945,1115 1235,1205 1225,1190 1355,455 1210,400 1195,230" fill="#959597" stroke="#8a8a8c" stroke-width="5" stroke-linejoin="round"/><polygon points="1190,200 1320,225 1320,430 1210,400" fill="#8c8c8e"/><polygon points="1190,200 1505,175 1530,210 1320,225" fill="#9d9d9f"/><polygon points="1320,225 1530,210 1540,415 1325,430" fill="url(#gadapt)" stroke="#8e8e90" stroke-width="4" stroke-linejoin="round"/><polygon points="1535,150 1690,145 1695,405 1545,415" fill="#a5a5a7" stroke="#8e8e90" stroke-width="4" stroke-linejoin="round"/><polygon points="1510,110 1680,105 1690,150 1520,155" fill="#78787a"/><polygon points="1690,210 1850,210 1850,400 1695,405" fill="url(#gadapt)" stroke="#8e8e90" stroke-width="4" stroke-linejoin="round"/><polygon points="1355,455 1430,480 1360,940 1285,905" fill="#8e8e90"/><polygon points="1430,475 1800,425 1850,895 1370,945" fill="#979799" stroke="#8a8a8c" stroke-width="4" stroke-linejoin="round"/><polygon points="1225,1190 1290,905 1365,945 1240,1200" fill="#878789"/><polygon points="1365,945 1850,895 1955,1100 1235,1200" fill="url(#gflange3)" stroke="#8a8a8c" stroke-width="4" stroke-linejoin="round"/></g><g transform="translate(1390,1030) scale(0.183908)"><polygon points="10,170 250,150 255,95 420,90 485,150 655,135 660,80 820,78 860,130 1005,120 1010,68 1165,62 1180,115 1300,110 1305,55 1455,52 1470,100 1550,100 1555,45 1700,42 1760,95 1765,40 1905,38 1915,90 1930,300 1965,850 1800,875 1710,840 1770,880 1590,905 1500,870 1555,910 1340,935 1240,890 1275,950 1040,985 930,950 955,990 690,1030 570,985 590,1045 270,1085 165,1010 80,870 40,425 10,400" fill="#959597" stroke="#8a8a8c" stroke-width="4" stroke-linejoin="round"/><polygon points="10,172 142.0,190 142.0,395 40,410" fill="#8f8f91" stroke="#88888a" stroke-width="3" stroke-linejoin="round"/><polygon points="142.0,190 490,178 490,385 142.0,395" fill="url(#gadapt)" stroke="#8a8a8c" stroke-width="3" stroke-linejoin="round"/><polygon points="250,112 260,92 410,92 425,112 428,385 255,390" fill="#959597" stroke="#858587" stroke-width="3" stroke-linejoin="round"/><polygon points="290,137 420,134 425,382 295,387" fill="url(#gtab)" stroke="#8a8a8c" stroke-width="3" stroke-linejoin="round"/><polygon points="260,92 410,92 420,134 290,137" fill="#7c7c7e"/><polygon points="40,425 120,418 165,880 270,1085 165,1010 80,870" fill="#8f8f91" stroke="#878789" stroke-width="3" stroke-linejoin="round"/><polygon points="120,418 430,398 465,850 165,880" fill="url(#gblade)" stroke="#8a8a8c" stroke-width="4" stroke-linejoin="round"/><polygon points="165,880 465,850 590,1045 270,1085" fill="url(#gflange3)" stroke="#8a8a8c" stroke-width="4" stroke-linejoin="round"/><polygon points="480,162 576.25,180 576.25,370 510,385" fill="#8f8f91" stroke="#88888a" stroke-width="3" stroke-linejoin="round"/><polygon points="576.25,180 860,168 860,360 576.25,370" fill="url(#gadapt)" stroke="#8a8a8c" stroke-width="3" stroke-linejoin="round"/><polygon points="655,100 665,80 810,80 825,100 828,360 660,365" fill="#959597" stroke="#858587" stroke-width="3" stroke-linejoin="round"/><polygon points="695,125 820,122 825,357 700,362" fill="url(#gtab)" stroke="#8a8a8c" stroke-width="3" stroke-linejoin="round"/><polygon points="665,80 810,80 820,122 695,125" fill="#7c7c7e"/><polygon points="430,400 525,385 575,830 690,1030 570,985 470,850" fill="#8f8f91" stroke="#878789" stroke-width="3" stroke-linejoin="round"/><polygon points="525,385 790,375 820,810 575,830" fill="url(#gblade)" stroke="#8a8a8c" stroke-width="4" stroke-linejoin="round"/><polygon points="575,830 820,810 955,990 690,1030" fill="url(#gflange3)" stroke="#8a8a8c" stroke-width="4" stroke-linejoin="round"/><polygon points="830,137 926.25,155 926.25,355 860,370" fill="#8f8f91" stroke="#88888a" stroke-width="3" stroke-linejoin="round"/><polygon points="926.25,155 1190,143 1190,345 926.25,355" fill="url(#gadapt)" stroke="#8a8a8c" stroke-width="3" stroke-linejoin="round"/><polygon points="1005,88 1015,68 1155,68 1170,88 1173,345 1010,350" fill="#959597" stroke="#858587" stroke-width="3" stroke-linejoin="round"/><polygon points="1045,113 1165,110 1170,342 1050,347" fill="url(#gtab)" stroke="#8a8a8c" stroke-width="3" stroke-linejoin="round"/><polygon points="1015,68 1155,68 1165,110 1045,113" fill="#7c7c7e"/><polygon points="800,375 880,365 925,790 1040,985 930,950 835,800" fill="#8f8f91" stroke="#878789" stroke-width="3" stroke-linejoin="round"/><polygon points="880,365 1110,350 1140,770 925,790" fill="url(#gblade)" stroke="#8a8a8c" stroke-width="4" stroke-linejoin="round"/><polygon points="925,790 1140,770 1275,950 1040,985" fill="url(#gflange3)" stroke="#8a8a8c" stroke-width="4" stroke-linejoin="round"/><polygon points="1170,127 1241.5,145 1241.5,340 1200,355" fill="#8f8f91" stroke="#88888a" stroke-width="3" stroke-linejoin="round"/><polygon points="1241.5,145 1470,133 1470,330 1241.5,340" fill="url(#gadapt)" stroke="#8a8a8c" stroke-width="3" stroke-linejoin="round"/><polygon points="1300,75 1310,55 1450,55 1465,75 1468,330 1305,335" fill="#959597" stroke="#858587" stroke-width="3" stroke-linejoin="round"/><polygon points="1340,100 1460,97 1465,327 1345,332" fill="url(#gtab)" stroke="#8a8a8c" stroke-width="3" stroke-linejoin="round"/><polygon points="1310,55 1450,55 1460,97 1340,100" fill="#7c7c7e"/><polygon points="1110,350 1190,340 1225,750 1340,935 1240,890 1150,760" fill="#8f8f91" stroke="#878789" stroke-width="3" stroke-linejoin="round"/><polygon points="1190,335 1380,325 1410,735 1225,750" fill="url(#gblade)" stroke="#8a8a8c" stroke-width="4" stroke-linejoin="round"/><polygon points="1225,750 1410,735 1555,910 1340,935" fill="url(#gflange3)" stroke="#8a8a8c" stroke-width="4" stroke-linejoin="round"/><polygon points="1460,117 1509.5,135 1509.5,325 1490,340" fill="#8f8f91" stroke="#88888a" stroke-width="3" stroke-linejoin="round"/><polygon points="1509.5,135 1720,123 1720,315 1509.5,325" fill="url(#gadapt)" stroke="#8a8a8c" stroke-width="3" stroke-linejoin="round"/><polygon points="1550,65 1560,45 1690,45 1705,65 1708,315 1555,320" fill="#959597" stroke="#858587" stroke-width="3" stroke-linejoin="round"/><polygon points="1590,90 1700,87 1705,312 1595,317" fill="url(#gtab)" stroke="#8a8a8c" stroke-width="3" stroke-linejoin="round"/><polygon points="1560,45 1690,45 1700,87 1590,90" fill="#7c7c7e"/><polygon points="1385,330 1460,320 1500,730 1590,905 1500,870 1420,740" fill="#8f8f91" stroke="#878789" stroke-width="3" stroke-linejoin="round"/><polygon points="1460,320 1600,305 1630,715 1500,730" fill="url(#gblade)" stroke="#8a8a8c" stroke-width="4" stroke-linejoin="round"/><polygon points="1500,730 1630,715 1770,880 1590,905" fill="url(#gflange3)" stroke="#8a8a8c" stroke-width="4" stroke-linejoin="round"/><polygon points="1700,107 1733.0,125 1733.0,310 1730,325" fill="#8f8f91" stroke="#88888a" stroke-width="3" stroke-linejoin="round"/><polygon points="1733.0,125 1900,113 1900,300 1733.0,310" fill="url(#gadapt)" stroke="#8a8a8c" stroke-width="3" stroke-linejoin="round"/><polygon points="1760,60 1770,40 1900,40 1915,60 1918,300 1765,305" fill="#959597" stroke="#858587" stroke-width="3" stroke-linejoin="round"/><polygon points="1800,85 1910,82 1915,297 1805,302" fill="url(#gtab)" stroke="#8a8a8c" stroke-width="3" stroke-linejoin="round"/><polygon points="1770,40 1900,40 1910,82 1800,85" fill="#7c7c7e"/><polygon points="1600,310 1680,305 1720,710 1800,875 1710,840 1640,720" fill="#8f8f91" stroke="#878789" stroke-width="3" stroke-linejoin="round"/><polygon points="1680,305 1780,300 1810,700 1720,710" fill="url(#gblade)" stroke="#8a8a8c" stroke-width="4" stroke-linejoin="round"/><polygon points="1720,710 1810,700 1965,850 1800,875" fill="url(#gflange3)" stroke="#8a8a8c" stroke-width="4" stroke-linejoin="round"/></g><g transform="translate(1690,1025) scale(0.134336)"><polygon points="110,165 195,170 190,190 110,185" fill="#f3a51d"/><polygon points="390,160 605,145 610,80 790,75 815,130 1080,130 1085,65 1255,60 1275,140 1370,160 1340,375 1230,395 1280,880 1480,1060 1465,1080 560,1200 480,1180 300,1000 215,470 300,430 385,420 385,210" fill="#f2a51c" stroke="#f0a010" stroke-width="6" stroke-linejoin="round"/><polygon points="390,165 1365,160 1340,375 395,420" fill="#f7ab1d"/><polygon points="610,90 650,85 640,400 605,400" fill="#dd9618"/><polygon points="1085,75 1125,70 1110,375 1075,380" fill="#dd9618"/><polygon points="680,85 795,80 810,115 690,120" fill="#b27814"/><polygon points="1150,70 1255,65 1265,95 1160,100" fill="#b27814"/><polygon points="300,430 1225,395 1280,880 360,970" fill="#f0a21b" stroke="#e89c14" stroke-width="5" stroke-linejoin="round"/><polygon points="215,470 300,430 360,970 300,1000" fill="#eaa01a"/><polygon points="380,980 1270,880 1480,1060 560,1185" fill="#d6911a" stroke="#e49a16" stroke-width="5" stroke-linejoin="round"/><polygon points="300,1000 380,980 560,1185 480,1180" fill="#e8a01c"/></g></svg>
<svg style="position:absolute;left:0;top:0" width="2472" height="1414"><line x1="1188.5" y1="1264" x2="1188.5" y2="1278.9" stroke="#7262d6" stroke-width="2"/><line x1="1355" y1="1241.5" x2="1355" y2="1315.5" stroke="#7262d6" stroke-width="2"/><line x1="1830.5" y1="1176.5" x2="1830.5" y2="1193" stroke="#7262d6" stroke-width="2"/><line x1="1469" y1="1226.2" x2="1469" y2="1270.7" stroke="#3b5654" stroke-width="2"/><line x1="1541.9" y1="1217.3" x2="1541.9" y2="1347" stroke="#3b5654" stroke-width="2"/><line x1="1604.5" y1="1208.3" x2="1604.5" y2="1223.6" stroke="#3b5654" stroke-width="2"/><line x1="1657.9" y1="1200.7" x2="1657.9" y2="1302" stroke="#3b5654" stroke-width="2"/><line x1="1703.7" y1="1194.3" x2="1703.7" y2="1267.6" stroke="#3b5654" stroke-width="2"/><line x1="1741.4" y1="1189.3" x2="1741.4" y2="1233.3" stroke="#3b5654" stroke-width="2"/></svg>
<div class="lab p" style="left:1187.8px;top:1278.9px;width:91.2px;height:21.9px"><span>1 × 181.011</span></div>
<div class="lab p" style="left:1354.6px;top:1315.5px;width:91.1px;height:21.5px"><span>1 × 181.010</span></div>
<div class="lab p" style="left:1830.0px;top:1193.0px;width:98.6px;height:20.5px"><span>23 × 179.680</span></div>
<div class="lab t" style="left:1468.3px;top:1270.7px;width:91.1px;height:21.1px"><span>1 × 179.688</span></div>
<div class="lab t" style="left:1541.1px;top:1347.0px;width:91.6px;height:21.2px"><span>1 × 179.687</span></div>
<div class="lab t" style="left:1604.0px;top:1223.6px;width:91.1px;height:20.4px"><span>1 × 179.686</span></div>
<div class="lab t" style="left:1657.4px;top:1302.0px;width:91.1px;height:21.6px"><span>1 × 179.685</span></div>
<div class="lab t" style="left:1703.2px;top:1267.6px;width:91.2px;height:21.4px"><span>1 × 179.683</span></div>
<div class="lab t" style="left:1741.0px;top:1233.3px;width:91.3px;height:20.9px"><span>1 × 179.682</span></div>
<svg style="position:absolute;left:2200px;top:1020px" width="272" height="70" viewBox="2200 1020 272 70"><path d="M2239 1055.5 H2232.5 V1036 H2249.8 V1044" fill="none" stroke="#6c6c6e" stroke-width="2"/><path d="M2249.5 1048 V1054.5 H2243.5" fill="none" stroke="#6c6c6e" stroke-width="1.5"/><circle cx="2249" cy="1053.6" r="7.6" fill="none" stroke="#6c6c6e" stroke-width="2.6"/><line x1="2254.6" y1="1059.4" x2="2261.6" y2="1068" stroke="#6c6c6e" stroke-width="3.6"/><circle cx="2291.3" cy="1048.8" r="10.6" fill="none" stroke="#6c6c6e" stroke-width="3"/><line x1="2298.8" y1="1057" x2="2308.3" y2="1068.2" stroke="#6c6c6e" stroke-width="4"/><path d="M2326.5 1052.8 H2357.5 M2341.7 1036.5 V1070" fill="none" stroke="#6c6c6e" stroke-width="2"/><path d="M2331.5 1047.8 L2326.5 1052.8 L2331.5 1057.8 M2352.5 1047.8 L2357.5 1052.8 L2352.5 1057.8 M2336.7 1041.5 L2341.7 1036.5 L2346.7 1041.5 M2336.7 1065 L2341.7 1070 L2346.7 1065" fill="none" stroke="#6c6c6e" stroke-width="2.2"/><rect x="2367.3" y="1029.7" width="41.7" height="46.2" fill="#f2d29f"/><path d="M2375.4 1060.6 A14.9 14.9 0 1 0 2377.6 1042.8" fill="none" stroke="#6c6c6e" stroke-width="3.2" stroke-linecap="round"/><path d="M2374.3 1038.5 L2374.2 1048.2 L2384.8 1047.4" fill="none" stroke="#6c6c6e" stroke-width="3" stroke-linecap="round"/><polygon points="2374.2,1042 2374.2,1048.2 2380,1047.8" fill="#6c6c6e"/><line x1="2428.5" y1="1044.8" x2="2421.5" y2="1037.8" stroke="#6c6c6e" stroke-width="2.8"/><path d="M2421.5 1043.3 L2421.5 1037.8 L2427.0 1037.8" fill="none" stroke="#6c6c6e" stroke-width="2.8"/><line x1="2443.0" y1="1044.8" x2="2450.0" y2="1037.8" stroke="#6c6c6e" stroke-width="2.8"/><path d="M2450.0 1043.3 L2450.0 1037.8 L2444.5 1037.8" fill="none" stroke="#6c6c6e" stroke-width="2.8"/><line x1="2428.5" y1="1061.5" x2="2421.5" y2="1068.5" stroke="#6c6c6e" stroke-width="2.8"/><path d="M2421.5 1063.0 L2421.5 1068.5 L2427.0 1068.5" fill="none" stroke="#6c6c6e" stroke-width="2.8"/><line x1="2443.0" y1="1061.5" x2="2450.0" y2="1068.5" stroke="#6c6c6e" stroke-width="2.8"/><path d="M2450.0 1063.0 L2450.0 1068.5 L2444.5 1068.5" fill="none" stroke="#6c6c6e" stroke-width="2.8"/></svg>
</body></html>
